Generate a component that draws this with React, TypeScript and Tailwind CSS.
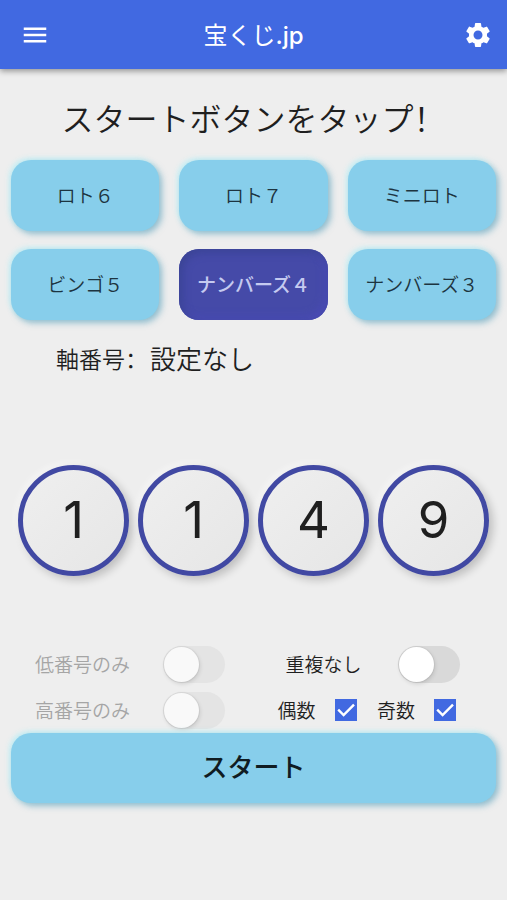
import React, { useState } from 'react';
import clsx from 'clsx';
import { MdMenu, MdSettings } from 'react-icons/md';

const games = ['ロト６', 'ロト７', 'ミニロト', 'ビンゴ５', 'ナンバーズ４', 'ナンバーズ３'];

const raised = 'bg-[#87ceeb] shadow-[3px_3px_6px_rgba(70,150,180,0.55),-2px_-2px_5px_rgba(190,240,248,0.8)]';

function Switch(props: { id: string; checked: boolean; disabled?: boolean; onChange: (value: boolean) => void }) {
  return (
    <input
      id={props.id}
      type="checkbox"
      role="switch"
      checked={props.checked}
      disabled={props.disabled}
      onChange={(e) => props.onChange(e.target.checked)}
      className="flex h-[37px] w-[62px] shrink-0 appearance-none items-center rounded-full bg-[#d9d9d9] p-px transition before:size-[35px] before:rounded-full before:bg-white before:shadow-[1px_2px_4px_rgba(0,0,0,0.12),0_0_1px_1px_rgba(0,0,0,0.05)] before:transition before:content-[''] checked:bg-[#4169e1] checked:before:translate-x-[25px] disabled:bg-[#e4e4e4] disabled:before:bg-[#f9f9f9]"
    />
  );
}

function CheckBox(props: { id: string; label: string; checked: boolean; onChange: (value: boolean) => void }) {
  return (
    <div className="flex items-center gap-[19px]">
      <label htmlFor={props.id}>{props.label}</label>
      <span className="grid size-[22px] place-items-center">
        <input
          id={props.id}
          type="checkbox"
          checked={props.checked}
          onChange={(e) => props.onChange(e.target.checked)}
          className="col-start-1 row-start-1 size-[22px] appearance-none border-2 border-gray-500 bg-transparent checked:border-[#4169e1] checked:bg-[#4169e1]"
        />
        {props.checked && (
          <svg viewBox="0 0 22 22" className="pointer-events-none col-start-1 row-start-1 size-[22px]" fill="none">
            <path d="M3.2 10.6 L8.6 16 L19 5.6" stroke="white" strokeWidth="2.4" />
          </svg>
        )}
      </span>
    </div>
  );
}

export default function App() {
  const [game, setGame] = useState('ナンバーズ４');
  const [numbers, setNumbers] = useState([1, 1, 4, 9]);
  const [unique, setUnique] = useState(false);
  const [low, setLow] = useState(false);
  const [high, setHigh] = useState(false);
  const [even, setEven] = useState(true);
  const [odd, setOdd] = useState(true);

  const handleStart = () => {
    setNumbers(numbers.map(() => Math.floor(Math.random() * 10)));
  };

  return (
    <div className="min-h-screen bg-[#eeeeee] font-['Noto_Sans_CJK_JP',sans-serif] font-[350] text-[#1f1f1f]">
      <header className="grid h-[69px] grid-cols-[1fr_auto_1fr] items-center bg-[#4169e1] pr-[14px] pl-5 text-white shadow-[0_2px_6px_rgba(0,0,0,0.4)]">
        <button aria-label="メニュー" className="justify-self-start">
          <MdMenu size={30} />
        </button>
        <h1 className="pt-0.5 pr-1.5 font-['Inter','Noto_Sans_CJK_JP',sans-serif] text-2xl font-medium">
          <span className="font-normal">宝くじ</span>.jp
        </h1>
        <button aria-label="設定" className="justify-self-end">
          <MdSettings size={30} />
        </button>
      </header>

      <main className="px-[11px]">
        <h2 className="pt-6 text-center text-[32px] leading-[48px] font-[350]">
          スタートボタンをタップ<span className="font-['Noto_Sans_CJK_SC',sans-serif]">！</span>
        </h2>

        <div className="mt-[19px] grid grid-cols-3 gap-x-5 gap-y-[18px]">
          {games.map((name) => (
            <button
              key={name}
              onClick={() => setGame(name)}
              className={clsx(
                'h-[71px] rounded-[20px] text-[19px] whitespace-nowrap',
                game === name
                  ? 'bg-[#454aa8] font-medium text-[#c5caf0] shadow-[inset_3px_3px_8px_#3a4494,inset_-3px_-3px_8px_#4c4cb8]'
                  : `${raised} text-[#1d3440]`
              )}
            >
              {name}
            </button>
          ))}
        </div>

        <p className="mt-[18px] flex items-center gap-0.5 pl-[45px] leading-10">
          <span className="text-[23px]">
            軸番号<span className="font-['Noto_Sans_CJK_SC',sans-serif]">：</span>
          </span>
          <span className="text-[26px]">設定なし</span>
        </p>

        <div className="mt-[87px] flex justify-center gap-[9px]">
          {numbers.map((n, i) => (
            <div
              key={i}
              className="flex size-[111px] items-center justify-center rounded-full border-5 border-[#4149a3] bg-linear-to-br from-[#efefef] to-[#e6e6e6] font-['Inter',sans-serif] text-[51px] font-normal shadow-[4px_4px_8px_rgba(0,0,0,0.2),-3px_-3px_6px_rgba(255,255,255,0.4)]"
            >
              {n}
            </div>
          ))}
        </div>

        <div className="mt-[65px] grid grid-cols-2 text-[19px]">
          <div className="flex h-[46px] items-center justify-between pr-[29px] pl-6 text-[#a5a5a5]">
            <label htmlFor="low">低番号のみ</label>
            <Switch id="low" checked={low} disabled onChange={setLow} />
          </div>
          <div className="flex h-[46px] items-center justify-between pr-9 pl-8">
            <label htmlFor="unique">重複なし</label>
            <Switch id="unique" checked={unique} onChange={setUnique} />
          </div>
          <div className="flex h-[46px] items-center justify-between pr-[29px] pl-6 text-[#a5a5a5]">
            <label htmlFor="high">高番号のみ</label>
            <Switch id="high" checked={high} disabled onChange={setHigh} />
          </div>
          <div className="flex h-[46px] items-center justify-between pr-10 pl-6">
            <CheckBox id="even" label="偶数" checked={even} onChange={setEven} />
            <CheckBox id="odd" label="奇数" checked={odd} onChange={setOdd} />
          </div>
        </div>

        <button
          onClick={handleStart}
          className={`${raised} h-[70px] w-full rounded-[20px] pb-1.5 text-[26px] font-medium text-[#101c22]`}
        >
          スタート
        </button>
      </main>
    </div>
  );
}
